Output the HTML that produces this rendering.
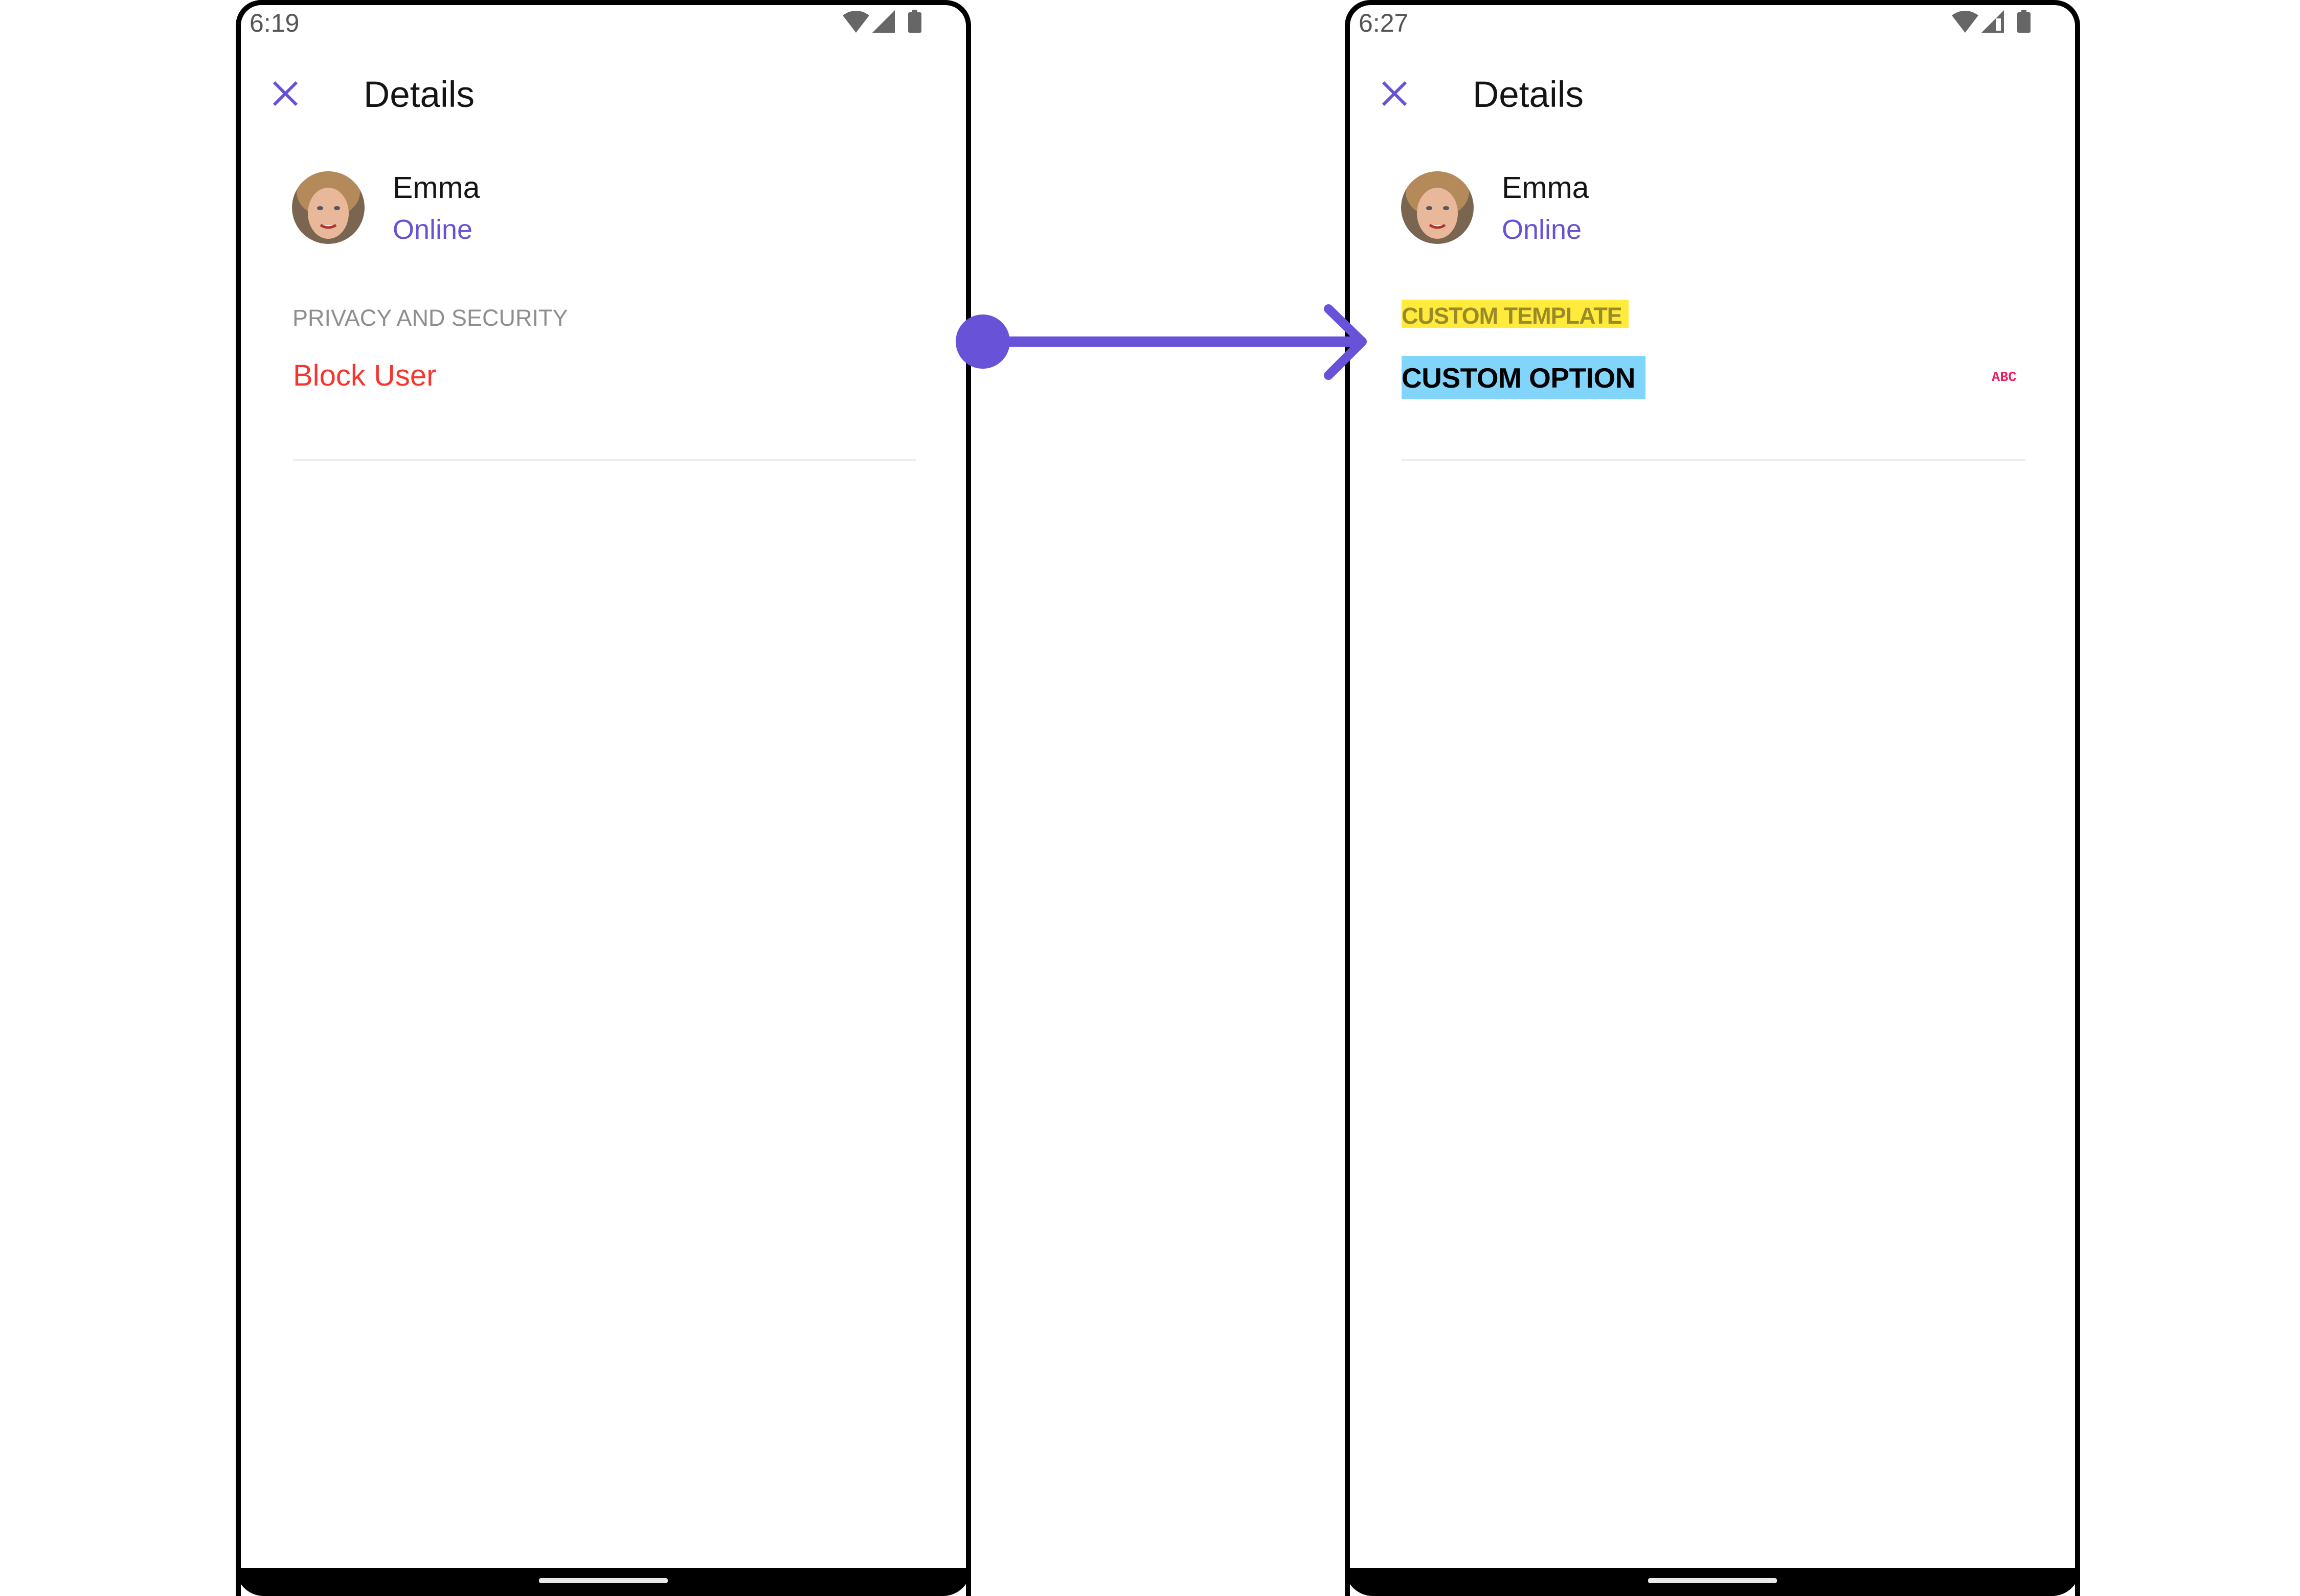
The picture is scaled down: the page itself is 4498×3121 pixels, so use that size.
<!DOCTYPE html>
<html><head><meta charset="utf-8"><style>
html,body{margin:0;padding:0;background:#fff;}
body{width:4498px;height:3121px;position:relative;overflow:hidden;font-family:"Liberation Sans",sans-serif;}
.ph{position:absolute;top:0;width:1438px;height:3121px;}
.frame{position:absolute;left:0;top:0;width:1418px;height:3111px;border:10px solid #000;border-bottom:none;border-radius:50px 50px 0 0;}
.bot{position:absolute;left:0;top:3066px;width:1438px;height:55px;background:#000;border-radius:0 0 60px 60px;}
.home{position:absolute;left:593px;top:3086px;width:252px;height:10px;background:#e8e8e8;border-radius:4px;}
.t{position:absolute;white-space:nowrap;line-height:1;}
.div{position:absolute;left:111px;top:897px;width:1220px;height:4px;background:#eeeeee;}
</style></head><body>

<!-- LEFT PHONE -->
<div class="ph" style="left:461px;">
  <div class="frame"></div>
  <div class="bot"></div><div class="home"></div>
  <div class="t" style="left:27px;top:20px;font-size:50px;color:#555;">6:19</div>
  <svg style="position:absolute;left:1185px;top:18px" width="160" height="50" viewBox="0 0 160 50">
    <path d="M2 12 Q28 -6 54 12 L28 46 Z" fill="#666"/>
    <path d="M60 46 L104 2 L104 46 Z" fill="#666"/>
    <rect x="130" y="6" width="26" height="40" rx="3" fill="#666"/><rect x="138" y="1" width="10" height="6" fill="#666"/>
  </svg>
  <svg style="position:absolute;left:72px;top:159px" width="50" height="48" viewBox="0 0 50 48"><path d="M3 2 L47 46 M47 2 L3 46" stroke="#6851D6" stroke-width="6"/></svg>
  <div class="t" style="left:250px;top:150px;font-size:71px;color:#141414;font-weight:500;">Details</div>
  <svg style="position:absolute;left:110px;top:335px" width="142" height="142" viewBox="0 0 142 142">
    <defs><clipPath id="c1"><circle cx="71" cy="71" r="71"/></clipPath></defs>
    <g clip-path="url(#c1)"><rect width="142" height="142" fill="#7a6650"/>
    <ellipse cx="71" cy="40" rx="62" ry="50" fill="#b48a5a"/>
    <ellipse cx="71" cy="82" rx="40" ry="50" fill="#e9b79a"/>
    <ellipse cx="55" cy="72" rx="6" ry="4" fill="#556"/><ellipse cx="88" cy="72" rx="6" ry="4" fill="#556"/>
    <path d="M56 105 Q71 115 86 105" stroke="#a33" stroke-width="5" fill="#fff"/></g>
  </svg>
  <div class="t" style="left:307px;top:338px;font-size:59px;color:#141414;">Emma</div>
  <div class="t" style="left:307px;top:422px;font-size:54px;color:#6851D6;">Online</div>
  <div class="t" style="left:111px;top:599px;font-size:45px;color:#8e8e8e;">PRIVACY AND SECURITY</div>
  <div class="t" style="left:112px;top:706px;font-size:58px;color:#F4362E;font-weight:500;">Block User</div>
  <div class="div"></div>
</div>

<!-- RIGHT PHONE -->
<div class="ph" style="left:2630px;">
  <div class="frame"></div>
  <div class="bot"></div><div class="home"></div>
  <div class="t" style="left:27px;top:20px;font-size:50px;color:#555;">6:27</div>
  <svg style="position:absolute;left:1185px;top:18px" width="160" height="50" viewBox="0 0 160 50">
    <path d="M2 12 Q28 -6 54 12 L28 46 Z" fill="#666"/>
    <path d="M60 46 L104 2 L104 46 Z" fill="#666"/><rect x="88" y="18" width="10" height="24" fill="#fff"/>
    <rect x="130" y="6" width="26" height="40" rx="3" fill="#666"/><rect x="138" y="1" width="10" height="6" fill="#666"/>
  </svg>
  <svg style="position:absolute;left:72px;top:159px" width="50" height="48" viewBox="0 0 50 48"><path d="M3 2 L47 46 M47 2 L3 46" stroke="#6851D6" stroke-width="6"/></svg>
  <div class="t" style="left:250px;top:150px;font-size:71px;color:#141414;font-weight:500;">Details</div>
  <svg style="position:absolute;left:110px;top:335px" width="142" height="142" viewBox="0 0 142 142">
    <defs><clipPath id="c2"><circle cx="71" cy="71" r="71"/></clipPath></defs>
    <g clip-path="url(#c2)"><rect width="142" height="142" fill="#7a6650"/>
    <ellipse cx="71" cy="40" rx="62" ry="50" fill="#b48a5a"/>
    <ellipse cx="71" cy="82" rx="40" ry="50" fill="#e9b79a"/>
    <ellipse cx="55" cy="72" rx="6" ry="4" fill="#556"/><ellipse cx="88" cy="72" rx="6" ry="4" fill="#556"/>
    <path d="M56 105 Q71 115 86 105" stroke="#a33" stroke-width="5" fill="#fff"/></g>
  </svg>
  <div class="t" style="left:307px;top:338px;font-size:59px;color:#141414;">Emma</div>
  <div class="t" style="left:307px;top:422px;font-size:54px;color:#6851D6;">Online</div>
  <div class="t" style="left:111px;top:586px;width:444px;height:55px;background:#FFEB3B;"></div>
  <div class="t" style="left:111px;top:595px;font-size:45px;color:#9a8a2a;font-weight:bold;letter-spacing:-1px;">CUSTOM TEMPLATE</div>
  <div class="t" style="left:111px;top:696px;width:477px;height:84px;background:#81D4FA;"></div>
  <div class="t" style="left:111px;top:712px;font-size:55px;color:#000;font-weight:bold;letter-spacing:-0.5px;">CUSTOM OPTION</div>
  <div class="t" style="left:1265px;top:726px;font-size:27px;color:#E91E63;font-weight:bold;font-family:'Liberation Mono',monospace;">ABC</div>
  <div class="div"></div>
</div>

<!-- ARROW -->
<svg style="position:absolute;left:0;top:0" width="4498" height="3121">
  <circle cx="1922" cy="668" r="53" fill="#6853D8"/>
  <rect x="1960" y="658" width="700" height="20" fill="#6853D8"/>
  <path d="M2598 604 L2664 668 L2598 734" stroke="#6853D8" stroke-width="18" fill="none" stroke-linecap="round" stroke-linejoin="round"/>
</svg>
</body></html>
